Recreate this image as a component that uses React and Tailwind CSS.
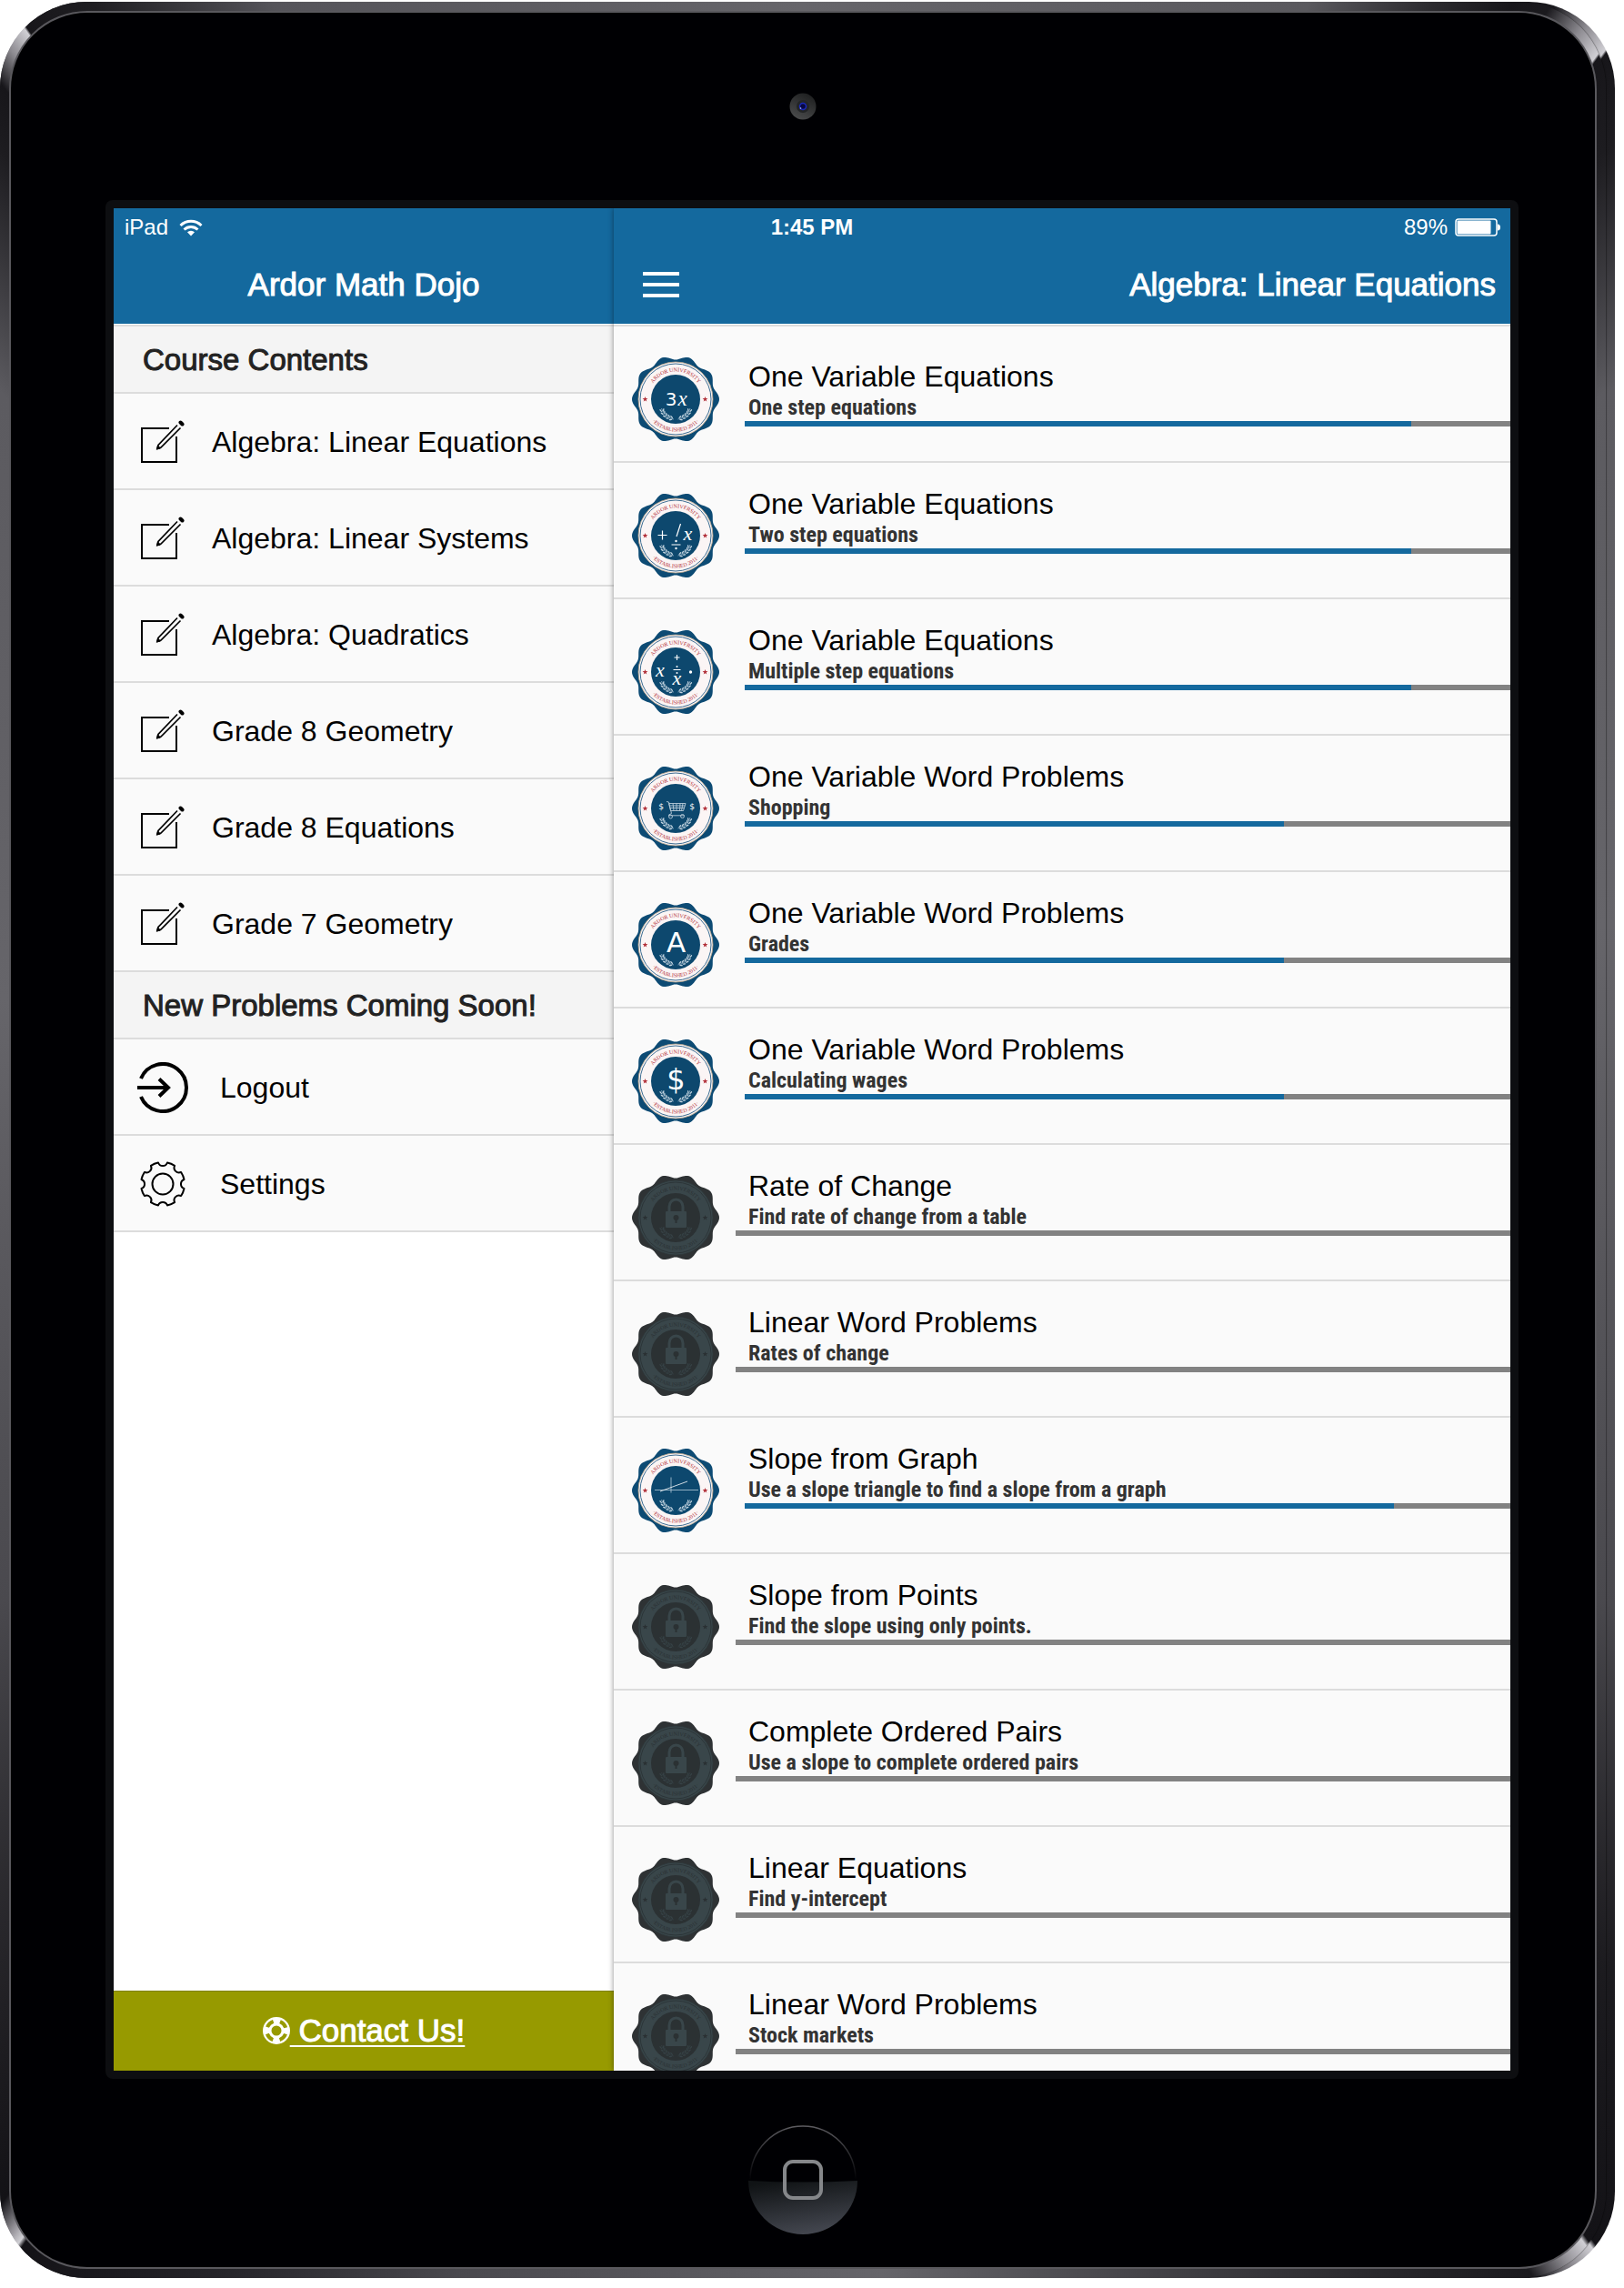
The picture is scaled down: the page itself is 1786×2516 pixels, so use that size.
import React from "react";

const BEVEL =
  "bg-[conic-gradient(#66656a_0deg,#5a595e_24deg,#2b2a2e_29deg,#17161a_32deg,#1b1a1e_33.4deg,#8d8b91_35deg,#d0cfd4_36.2deg,#17161a_36.3deg,#1d1c20_39deg,#5c5b60_47deg,#66656a_75deg,#4a494e_120deg,#1c1b1f_136deg,#131216_144.5deg,#d0cfd4_144.7deg,#8d8b91_145.8deg,#1b1a1e_147.3deg,#242327_151deg,#66656a_176deg,#4a494e_197deg,#26252a_207deg,#131216_215.2deg,#d0cfd4_215.4deg,#8d8b91_216deg,#131216_217deg,#242327_224deg,#4a494e_240deg,#66656a_280deg,#5c5b60_313deg,#1d1c20_321deg,#17161a_322.8deg,#8d8b91_324deg,#d0cfd4_325deg,#17161a_325.1deg,#1f1e22_328deg,#55545a_335deg,#66656a_360deg)]";

const courses = [
  "Algebra: Linear Equations",
  "Algebra: Linear Systems",
  "Algebra: Quadratics",
  "Grade 8 Geometry",
  "Grade 8 Equations",
  "Grade 7 Geometry",
];

const lessons = [
  { title: "One Variable Equations", sub: "One step equations", progress: 87, symbol: "3x" },
  { title: "One Variable Equations", sub: "Two step equations", progress: 87, symbol: "two" },
  { title: "One Variable Equations", sub: "Multiple step equations", progress: 87, symbol: "multi" },
  { title: "One Variable Word Problems", sub: "Shopping", progress: 70.4, symbol: "cart" },
  { title: "One Variable Word Problems", sub: "Grades", progress: 70.4, symbol: "A" },
  { title: "One Variable Word Problems", sub: "Calculating wages", progress: 70.4, symbol: "$" },
  { title: "Rate of Change", sub: "Find rate of change from a table" },
  { title: "Linear Word Problems", sub: "Rates of change" },
  { title: "Slope from Graph", sub: "Use a slope triangle to find a slope from a graph", progress: 84.8, symbol: "graph" },
  { title: "Slope from Points", sub: "Find the slope using only points." },
  { title: "Complete Ordered Pairs", sub: "Use a slope to complete ordered pairs" },
  { title: "Linear Equations", sub: "Find y-intercept" },
  { title: "Linear Word Problems", sub: "Stock markets" },
];

const scallop =
  "M" +
  Array.from({ length: 180 }, (_, i) => {
    const t = (i * Math.PI) / 90;
    const r = 45.75 + 2.25 * Math.cos(10 * t);
    return `${(48 + r * Math.cos(t)).toFixed(2)} ${(46 + r * Math.sin(t)).toFixed(2)}`;
  }).join("L") +
  "Z";

const gear = (() => {
  const pt = (deg, r) => {
    const a = (deg * Math.PI) / 180;
    return `${(25 + r * Math.sin(a)).toFixed(2)} ${(25 - r * Math.cos(a)).toFixed(2)}`;
  };
  let d = `M${pt(12, 24)}`;
  for (let k = 0; k < 8; k++) {
    const c = 22.5 + k * 45;
    d += `A24 24 0 0 1 ${pt(c + 10.5, 24)}A5.3 5.3 0 0 0 ${pt(c + 34.5, 24)}`;
  }
  return d + "Z";
})();

const star = (cx, cy, r) =>
  Array.from({ length: 10 }, (_, i) => {
    const a = (i * Math.PI) / 5 - Math.PI / 2;
    const q = i % 2 ? r * 0.42 : r;
    return `${(cx + q * Math.cos(a)).toFixed(2)},${(cy + q * Math.sin(a)).toFixed(2)}`;
  }).join(" ");

function Laurel({ color, flip }) {
  const leaves = [
    [33, 57.5, 75],
    [34.2, 60.5, 62],
    [36.4, 63.2, 48],
    [39.2, 65.3, 34],
    [42.4, 66.8, 20],
  ];
  return (
    <g transform={flip ? "translate(96.5 0) scale(-1 1)" : undefined}>
      <path d="M32.500 56Q35 66 46 68" fill="none" stroke={color} strokeWidth="0.6" />
      {leaves.map(([x, y, a]) => (
        <g key={y} transform={`translate(${x} ${y}) rotate(${a})`} fill={color}>
          <ellipse cx="0" cy="-1.700" rx="1.900" ry="0.700" transform="rotate(25)" />
          <ellipse cx="0" cy="1.700" rx="1.900" ry="0.700" transform="rotate(-25)" />
        </g>
      ))}
    </g>
  );
}

function Symbol({ kind }) {
  const sans = { fontFamily: "DejaVu Sans, sans-serif", fill: "#fff", textAnchor: "middle" };
  const math = { fontFamily: "Liberation Serif, serif", fontStyle: "italic", fill: "#fff", textAnchor: "middle" };
  if (kind === "3x")
    return (
      <>
        <text x="43" y="52.500" fontSize="20" {...sans}>3</text>
        <text x="55.500" y="52.500" fontSize="23" {...math}>x</text>
      </>
    );
  if (kind === "two")
    return (
      <>
        <path d="M28.5 45.5h10M33.5 40.5v10M53.5 33L49 47M43.5 56h10" stroke="#fff" strokeWidth="1.2" />
        <circle cx="48.5" cy="52" r="1.2" fill="#fff" />
        <circle cx="48.5" cy="60" r="1.2" fill="#fff" />
        <text x="61.500" y="51" fontSize="22" {...math}>x</text>
      </>
    );
  if (kind === "multi")
    return (
      <>
        <path d="M46.5 30h6M49.5 27v6M45.5 43.5h8" stroke="#fff" strokeWidth="1.1" />
        <circle cx="49.5" cy="40" r="1" fill="#fff" />
        <circle cx="49.5" cy="47" r="1" fill="#fff" />
        <circle cx="64.5" cy="46" r="1.7" fill="#fff" />
        <text x="31" y="51" fontSize="22" {...math}>x</text>
        <text x="49.5" y="60" fontSize="22" {...math}>x</text>
      </>
    );
  if (kind === "cart")
    return (
      <>
        <text x="32" y="47" fontSize="9" {...sans}>$</text>
        <text x="66" y="47" fontSize="9" {...sans}>$</text>
        <g fill="none" stroke="#b8cbd8" strokeWidth="0.9">
          <path d="M38 38.5l2.5 .5 3 12.5-3 1.5v.8h17" />
          <path d="M40.5 40.5h18.500l-2.500 8H42.500zM41 43h17M42 45.500h15.500M45 40.500l1 8M49 40.500v8M53 40.500l-.5 8M56 40.500l-1.500 8" />
          <circle cx="42.500" cy="55" r="2" />
          <circle cx="55.500" cy="54.500" r="2" />
        </g>
      </>
    );
  if (kind === "graph")
    return (
      <g stroke="#b4cbd9" strokeWidth="0.8">
        <path d="M25 45.500h48M43 31.500v17" />
        <path d="M31 47l30-11" stroke="#fff" />
      </g>
    );
  return (
    <text x="48.500" y={kind === "A" ? 54 : 55} fontSize={kind === "A" ? 31 : 32} {...sans}>
      {kind}
    </text>
  );
}

function Badge({ id, symbol }) {
  const locked = !symbol;
  const c = locked
    ? { edge: "#2e3234", ring: "#39464a", line: "#2c3538", core: "#2b3133", text: "#2a3033", leaf: "#364246" }
    : { edge: "#0d4b74", ring: "#fbf5f5", line: "#3d6d92", core: "#0d486e", text: "#b2303a", leaf: "#c3d4e0" };
  return (
    <svg viewBox="0 0 96 92" className="h-[92px] w-24 shrink-0" role="img" aria-label={locked ? "Locked" : "Ardor University badge"}>
      <path d={scallop} fill={c.edge} />
      <circle cx="48" cy="46" r="41" fill={c.ring} stroke={locked ? "#2e383b" : "#b9a58c"} strokeWidth="0.8" />
      <circle cx="48" cy="46" r="39" fill="none" stroke={c.line} strokeWidth="1" />
      <circle cx="48" cy="46" r="27" fill={c.core} />
      <path id={`${id}-top`} d="M17.500 46a30.500 30.500 0 0 1 61 0" fill="none" />
      <path id={`${id}-low`} d="M12.500 46a35.500 35.500 0 0 0 71 0" fill="none" />
      <text fontFamily="Liberation Serif, serif" fontSize="6" fill={c.text} textAnchor="middle">
        <textPath href={`#${id}-top`} startOffset="50%">ARDOR UNIVERSITY</textPath>
      </text>
      <text fontFamily="Liberation Serif, serif" fontSize="6" fill={c.text} textAnchor="middle">
        <textPath href={`#${id}-low`} startOffset="50%">·ESTABLISHED 2011·</textPath>
      </text>
      <polygon points={star(14.5, 46, 3)} fill={c.text} />
      <polygon points={star(80.5, 46, 3)} fill={c.text} />
      <Laurel color={c.leaf} />
      <Laurel color={c.leaf} flip />
      {locked ? (
        <>
          <path d="M41 40v-6a7.500 8 0 0 1 15 0v6" fill="none" stroke="#39464a" strokeWidth="3" />
          <rect x="37" y="39" width="23" height="18" rx="1" fill="#39464a" />
          <circle cx="48.500" cy="46" r="3" fill="#2b3133" />
          <path d="M47.500 47h2v5h-2z" fill="#2b3133" />
        </>
      ) : (
        <Symbol kind={symbol} />
      )}
    </svg>
  );
}

const ComposeIcon = () => (
  <svg viewBox="0 0 50 48" className="h-12 w-[50px]" fill="none" stroke="#000" strokeWidth="2" aria-hidden="true">
    <path d="M32 9H2v37h38V18" />
    <path d="M41 5.500L20 27.500l-1 4 4-1.500L44.500 8.500" strokeWidth="1.700" />
    <path d="M18.500 32l1-4 3 3z" fill="#000" strokeWidth="1" />
    <path d="M44.500 2.500l2 2" strokeWidth="4" strokeLinecap="round" />
  </svg>
);

const LogoutIcon = () => (
  <svg viewBox="0 0 56 56" className="size-14" fill="none" stroke="#000" strokeWidth="4" aria-hidden="true">
    <path d="M4 18A26 26 0 1 1 4 38" />
    <path d="M0 28h34" />
    <path d="M24 18.500L34 28l-10 9.500" />
  </svg>
);

const GearIcon = () => (
  <svg viewBox="0 0 50 50" className="size-[50px]" fill="none" stroke="#000" strokeWidth="2" strokeLinejoin="round" aria-hidden="true">
    <path d={gear} />
    <circle cx="25" cy="25" r="11.500" />
  </svg>
);

function SectionHeader({ children }) {
  return (
    <h2 className="border-b-2 border-[#dcdcdc] bg-[#f4f4f4] pt-[17px] pb-[15px] pl-8 text-[33px] leading-10 text-[#222] [-webkit-text-stroke:1px_#222]">
      {children}
    </h2>
  );
}

function MenuItem({ icon, wide, children }) {
  return (
    <li className="border-b-2 border-[#dcdcdc] bg-[#fafafa]">
      <a href="#" className="flex h-[104px] items-center pt-[2px] pl-[26px] text-[32px] leading-10 text-black">
        <span className={wide ? "flex w-[91px]" : "flex w-[82px]"}>
          <span className="flex w-14 justify-center">{icon}</span>
        </span>
        <span>{children}</span>
      </a>
    </li>
  );
}

function StatusBar() {
  return (
    <div className="absolute inset-x-0 top-0 z-10 grid h-10 grid-cols-3 items-center pt-[2px] text-2xl leading-8 text-white">
      <div className="flex items-center gap-3 pl-3">
        <span>iPad</span>
        <svg viewBox="0 0 26 19" className="h-[19px] w-[26px]" fill="none" stroke="#fff" strokeWidth="3" aria-hidden="true">
          <path d="M1.500 7a16.500 16.500 0 0 1 23 0" />
          <path d="M5.500 11.500a11 11 0 0 1 15 0" />
          <path d="M13 18.500l-4-4.200a5.800 5.800 0 0 1 8 0z" fill="#fff" stroke="none" />
        </svg>
      </div>
      <div className="text-center font-bold">1:45 PM</div>
      <div className="flex items-center justify-end gap-2 pr-[11px]">
        <span>89%</span>
        <svg viewBox="0 0 50 20" className="h-5 w-[50px]" aria-hidden="true">
          <rect x="1" y="1" width="45" height="18" rx="3" fill="none" stroke="#fff" strokeWidth="1.500" />
          <rect x="2.500" y="2.500" width="37" height="15" rx="1" fill="#fff" />
          <path d="M47 6.500q3 0 3 3.500t-3 3.500z" fill="#fff" />
        </svg>
      </div>
    </div>
  );
}

function Sidebar() {
  return (
    <aside className="flex w-[550px] shrink-0 flex-col bg-white">
      <header className="h-[130px] border-b-2 border-[#dcdcdc] bg-white pb-px">
        <div className="h-full bg-[#14699e] pt-16 text-center">
          <h1 className="text-[35px] leading-10 text-white [-webkit-text-stroke:1px_#fff]">Ardor Math Dojo</h1>
        </div>
      </header>
      <SectionHeader>Course Contents</SectionHeader>
      <ul>
        {courses.map((name) => (
          <MenuItem key={name} icon={<ComposeIcon />}>{name}</MenuItem>
        ))}
      </ul>
      <SectionHeader>New Problems Coming Soon!</SectionHeader>
      <ul>
        <MenuItem wide icon={<LogoutIcon />}>Logout</MenuItem>
        <MenuItem wide icon={<GearIcon />}>Settings</MenuItem>
      </ul>
      <a href="#" className="mt-auto flex h-[88px] items-center justify-center border-t border-[#7f8200] bg-[#979a00] pb-[2px] text-[35px] leading-10 text-white">
        <svg viewBox="0 0 30 30" className="size-[30px]" aria-hidden="true">
          <circle cx="15" cy="15" r="15" fill="#fff" />
          <circle cx="15" cy="15" r="5.500" fill="#979a00" />
          <circle cx="15" cy="15" r="10.700" fill="none" stroke="#979a00" strokeWidth="4" strokeDasharray="9.300 7.507" strokeDashoffset="-3.750" />
        </svg>
        <span className="whitespace-pre underline decoration-2 underline-offset-4 [-webkit-text-stroke:1px_#fff]"> Contact Us!</span>
      </a>
    </aside>
  );
}

function Lesson({ lesson, index }) {
  const open = lesson.progress !== undefined;
  return (
    <li className={index === 0 ? "h-[150px] border-b-2 border-[#dcdcdc] pt-[10px]" : "h-[150px] border-b-2 border-[#dcdcdc]"}>
      <a href="#" className="flex items-start gap-[18px] pl-5">
        <span className={index === 0 ? "block pt-6" : "block pt-[34px]"}>
          <Badge id={`badge-${index}`} symbol={lesson.symbol} />
        </span>
        <span className="block grow pt-[25px]">
          <span className="block pl-[14px] text-[32px] leading-10 text-black">{lesson.title}</span>
          <span className="block pl-[14px] font-['Roboto_Condensed','Roboto','Liberation_Sans',sans-serif] text-[24px] leading-[29px] font-bold text-[#333]">{lesson.sub}</span>
          <span className={open ? "ml-[10px] block h-[6px] bg-[#828282]" : "block h-[6px] bg-[#828282]"}>
            {open && <span className="block h-full bg-[#14699e]" style={{ width: `${lesson.progress}%` }} />}
          </span>
        </span>
      </a>
    </li>
  );
}

function Content() {
  return (
    <main className="relative flex min-w-0 grow flex-col bg-[#fafafa] shadow-[0_0_6px_rgba(0,0,0,0.45)]">
      <header className="h-[130px] shrink-0 border-b-2 border-[#dcdcdc] bg-white pb-px">
        <div className="flex h-full items-start justify-between bg-[#14699e] pt-16 pr-4 pl-8">
          <button aria-label="Menu" className="flex h-10 w-10 flex-col justify-center gap-2">
            <span className="block h-1 w-full bg-white" />
            <span className="block h-1 w-full bg-white" />
            <span className="block h-1 w-full bg-white" />
          </button>
          <h2 className="text-[35px] leading-10 text-white [-webkit-text-stroke:1px_#fff]">Algebra: Linear Equations</h2>
        </div>
      </header>
      <ul className="min-h-0 grow overflow-hidden">
        {lessons.map((lesson, i) => (
          <Lesson key={i} lesson={lesson} index={i} />
        ))}
      </ul>
    </main>
  );
}

export default function App() {
  return (
    <div className="h-screen bg-white pt-[2px] pr-[10px] pb-[11px] font-['Liberation_Sans',Arial,sans-serif]">
      <div className={`h-full rounded-[95px] pr-[10px] ${BEVEL}`}>
        <div className={`h-full rounded-[95px] p-[10px] shadow-[1px_0_1px_#00000055] ${BEVEL}`}>
          <div className="flex h-full flex-col rounded-[86px] border-2 border-[#59585d] bg-[#000003]">
            <div className="flex h-[206px] shrink-0 items-center justify-center">
              <svg viewBox="0 0 30 30" className="size-[30px]" aria-hidden="true">
                <defs>
                  <linearGradient id="lens" x1="0.8" y1="0" x2="0.3" y2="1">
                    <stop offset="0" stopColor="#1c1d1e" />
                    <stop offset="1" stopColor="#4a4b4c" />
                  </linearGradient>
                </defs>
                <circle cx="15" cy="15" r="14.500" fill="url(#lens)" />
                <circle cx="15" cy="15" r="7" fill="#232527" />
                <circle cx="15" cy="15" r="3.500" fill="#080840" stroke="#1a28b8" strokeWidth="1.500" />
                <circle cx="12.500" cy="17" r="0.800" fill="#b8c4ff" />
              </svg>
            </div>
            <div className="mr-[84px] ml-[104px] flex min-h-0 grow rounded-lg bg-[#0d0e11] p-[9px]">
              <div className="relative flex min-h-0 grow overflow-hidden bg-white">
                <StatusBar />
                <Sidebar />
                <Content />
              </div>
            </div>
            <div className="flex h-[207px] shrink-0 justify-center pt-[51px]">
              <button aria-label="Home" className="size-[120px] rounded-full">
                <svg viewBox="0 0 120 120" className="size-full" aria-hidden="true">
                  <defs>
                    <linearGradient id="home-fill" x1="0.3" y1="0" x2="0.6" y2="1">
                      <stop offset="0" stopColor="#101315" />
                      <stop offset="1" stopColor="#454851" />
                    </linearGradient>
                    <linearGradient id="home-edge" x1="0" y1="0" x2="0" y2="1">
                      <stop offset="0" stopColor="#5c5b60" />
                      <stop offset="1" stopColor="#000003" />
                    </linearGradient>
                  </defs>
                  <path d="M2 60a58 59 0 0 1 116 0" fill="none" stroke="url(#home-edge)" strokeWidth="1.500" />
                  <path d="M0 61q60 3 120 0a60 59 0 0 1-120 0z" fill="url(#home-fill)" />
                  <rect x="40" y="40" width="40" height="40" rx="9" fill="none" stroke="#85878a" strokeWidth="4" />
                </svg>
              </button>
            </div>
          </div>
        </div>
      </div>
    </div>
  );
}
